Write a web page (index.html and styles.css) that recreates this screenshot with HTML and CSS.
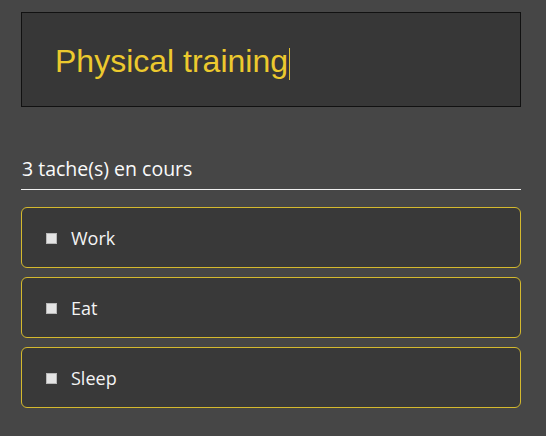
FILE: index.html
```html
<!DOCTYPE html>
<html>
<head>
<meta charset="utf-8">
<link rel="stylesheet" href="styles.css">
</head>
<body>
<div class="app">
  <div class="input-box"><span class="input-text">Physical training</span><span class="caret"></span></div>
  <h2 class="count">3 tache(s) en cours</h2>
  <ul class="tasks">
    <li class="task"><span class="check"></span><span class="label">Work</span></li>
    <li class="task"><span class="check"></span><span class="label">Eat</span></li>
    <li class="task"><span class="check"></span><span class="label">Sleep</span></li>
  </ul>
</div>
</body>
</html>
```
FILE: styles.css
```css
html, body {
  margin: 0;
  padding: 0;
  background: #464646;
}
body {
  font-family: "Open Sans", "Noto Sans", sans-serif;
}
.app {
  width: 500px;
  padding: 12px 0 0 21px;
}
.input-box {
  box-sizing: border-box;
  height: 95px;
  border: 1px solid #111;
  background: #373737;
  display: flex;
  align-items: center;
  padding-left: 33px;
  padding-top: 2px;
}
.input-text {
  font-family: "Liberation Sans", Arial, sans-serif;
  font-size: 32px;
  color: #ecc92e;
  line-height: 1;
}
.caret {
  display: inline-block;
  width: 1px;
  height: 32px;
  background: #e0c030;
  margin-left: 1px;
  margin-top: 6px;
}
.count {
  margin: 49px 0 0 0;
  font-size: 19.5px;
  font-weight: normal;
  color: #fafafa;
  line-height: 26px;
  padding-bottom: 7px;
  padding-left: 1px;
  border-bottom: 1px solid #f0f0f0;
}
.tasks {
  list-style: none;
  margin: 17px 0 0 0;
  padding: 0;
  display: flex;
  flex-direction: column;
  gap: 9px;
}
.task {
  box-sizing: border-box;
  height: 61px;
  border: 1px solid #d4b92e;
  border-radius: 6px;
  background: #393939;
  display: flex;
  align-items: center;
  padding-left: 24px;
}
.check {
  width: 11px;
  height: 11px;
  background: #e4e4e4;
  border: 1px solid #b8b8b8;
  box-sizing: border-box;
  margin-right: 14px;
  margin-top: 1px;
}
.label {
  font-size: 18px;
  color: #f4f4f4;
  line-height: 1;
}
```
